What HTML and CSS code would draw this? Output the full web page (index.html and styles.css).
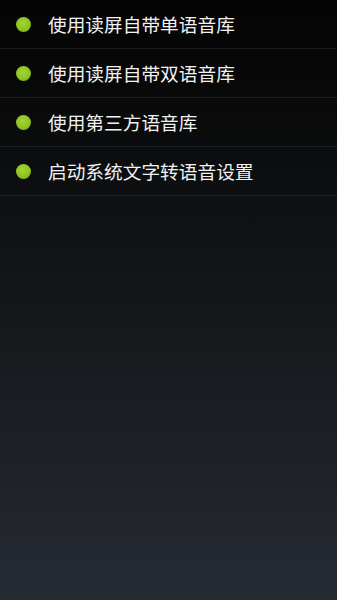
FILE: index.html
```html
<!DOCTYPE html>
<html lang="zh-CN">
<head>
<meta charset="utf-8">
<link rel="stylesheet" href="styles.css">
</head>
<body>
<ul class="menu">
  <li class="item"><span class="dot"></span><span class="label">使用读屏自带单语音库</span></li>
  <li class="item"><span class="dot"></span><span class="label">使用读屏自带双语音库</span></li>
  <li class="item"><span class="dot"></span><span class="label">使用第三方语音库</span></li>
  <li class="item"><span class="dot"></span><span class="label">启动系统文字转语音设置</span></li>
</ul>
</body>
</html>
```
FILE: styles.css
```css
html, body {
  margin: 0;
  padding: 0;
  height: 100%;
}
body {
  background: linear-gradient(to bottom, #040404 0%, #0b0c0d 25%, #16191c 55%, #262a33 100%);
  font-family: "Noto Sans CJK SC", "Noto Sans", sans-serif;
  color: #f2f2f2;
}
.menu {
  list-style: none;
  margin: 0;
  padding: 0;
}
.item {
  display: flex;
  align-items: center;
  height: 48px;
  border-bottom: 1px solid #1c1d1f;
  padding-left: 16px;
}
.dot {
  width: 15px;
  height: 15px;
  border-radius: 50%;
  background: radial-gradient(circle at 45% 40%, #a6d23a 0%, #8cc51f 55%, #6c9e10 100%);
  flex: none;
}
.label {
  margin-left: 17px;
  font-size: 18.7px;
  line-height: 1;
  letter-spacing: 0;
}
```
